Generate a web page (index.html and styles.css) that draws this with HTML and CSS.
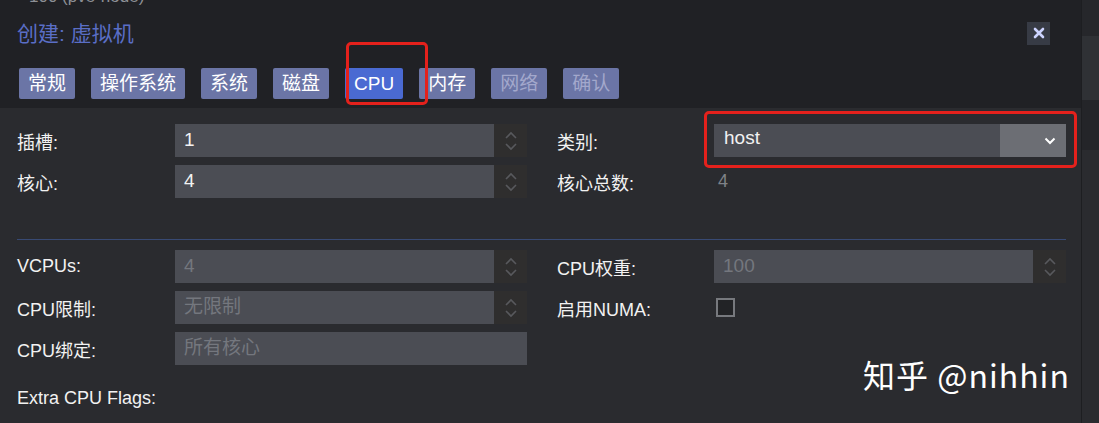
FILE: index.html
```html
<!DOCTYPE html>
<html lang="zh-CN">
<head>
    <meta charset="UTF-8">
    <title>创建: 虚拟机</title>
    <link rel="stylesheet" href="styles.css">
</head>
<body>

<div class="page">
    <div class="dialog">
        <div class="head">
            <div class="ghost"><span>100 (pve-node)</span></div>
            <div class="titlebar">
                <h1>创建: 虚拟机</h1>
                <button class="close" type="button">
                    <svg width="12" height="12" viewBox="0 0 12 12"><path d="M2 2 L10 10 M10 2 L2 10" stroke="#cdd4ff" stroke-width="2.6" stroke-linecap="round"/></svg>
                </button>
            </div>
            <div class="tabs">
                <span class="tab">常规</span>
                <span class="tab">操作系统</span>
                <span class="tab">系统</span>
                <span class="tab">磁盘</span>
                <span class="tab active">CPU</span>
                <span class="tab">内存</span>
                <span class="tab off">网络</span>
                <span class="tab off">确认</span>
            </div>
            <div class="mark mark-tab"></div>
        </div>

        <div class="body">
            <div class="section top">
                <div class="col">
                    <div class="row">
                        <label>插槽:</label>
                        <div class="field spin"><span class="val">1</span><span class="arrows"></span></div>
                    </div>
                    <div class="row">
                        <label>核心:</label>
                        <div class="field spin"><span class="val">4</span><span class="arrows"></span></div>
                    </div>
                </div>
                <div class="col right">
                    <div class="row">
                        <label>类别:</label>
                        <div class="field select">
                            <span class="val">host</span>
                            <span class="drop">
                                <svg width="12" height="8" viewBox="0 0 12 8"><path d="M1.5 1.5 L6 6 L10.5 1.5" fill="none" stroke="#fff" stroke-width="2"/></svg>
                            </span>
                        </div>
                    </div>
                    <div class="row">
                        <label>核心总数:</label>
                        <span class="plain">4</span>
                    </div>
                </div>
                <div class="mark mark-select"></div>
            </div>

            <div class="sep"></div>

            <div class="section">
                <div class="col">
                    <div class="row">
                        <label>VCPUs:</label>
                        <div class="field spin dim"><span class="val">4</span><span class="arrows"></span></div>
                    </div>
                    <div class="row">
                        <label>CPU限制:</label>
                        <div class="field spin dim"><span class="val">无限制</span><span class="arrows"></span></div>
                    </div>
                    <div class="row">
                        <label>CPU绑定:</label>
                        <div class="field dim"><span class="val">所有核心</span></div>
                    </div>
                    <div class="row flags">
                        <label>Extra CPU Flags:</label>
                    </div>
                </div>
                <div class="col right">
                    <div class="row">
                        <label>CPU权重:</label>
                        <div class="field spin dim"><span class="val">100</span><span class="arrows"></span></div>
                    </div>
                    <div class="row">
                        <label>启用NUMA:</label>
                        <span class="check"></span>
                    </div>
                    <div class="watermark">知乎 @nihhin</div>
                </div>
            </div>
        </div>
    </div>
    <div class="side"></div>
</div>

</body>
</html>
```

FILE: styles.css
```css
body {
    margin: 0;
    background-color: #232428;
    font-family: "Liberation Sans", "Noto Sans CJK SC", sans-serif;
    color: #f2f2f2;
    overflow: hidden;
}
.page {
    display: flex;
    height: 423px;
}
.dialog {
    width: 1081px;
    display: flex;
    flex-direction: column;
    border-right: 1px solid #1d1e21;
}
.side {
    flex: 1;
    background: linear-gradient(#26272b 0, #26272b 36px, #2f3135 36px, #2f3135 100px, #242529 100px, #242529 150px, #2a2b2f 150px);
}
.head {
    position: relative;
    height: 108px;
    background-color: #202125;
    padding: 0 0 0 17px;
    box-sizing: border-box;
}
.ghost {
    height: 8px;
    overflow: hidden;
    padding-left: 12px;
}
.ghost span {
    display: block;
    margin-top: -13px;
    font-size: 17px;
    color: #8d9096;
}
.titlebar {
    display: flex;
    justify-content: space-between;
    align-items: center;
    height: 50px;
    padding-right: 31px;
}
h1 {
    margin: 0 0 2px;
    font-size: 21px;
    font-weight: normal;
    color: #5a6ec6;
}
.close {
    width: 23px;
    height: 23px;
    padding: 0;
    border: none;
    background-color: #373b45;
    display: flex;
    align-items: center;
    justify-content: center;
}
.tabs {
    display: flex;
    gap: 16px;
    margin-top: 10px;
    padding-left: 2px;
}
.tab {
    height: 31px;
    line-height: 31px;
    padding: 0 9px;
    background-color: #6b75a6;
    border-radius: 2px;
    font-size: 19px;
    color: #fff;
}
.tab.active {
    background-color: #4a6ad2;
}
.tab.off {
    color: #a3a8cc;
}
.mark {
    position: absolute;
    border: 3px solid #e4211c;
    border-radius: 5px;
}
.mark-tab {
    left: 346px;
    top: 42px;
    width: 76px;
    height: 57px;
}
.body {
    flex: 1;
    position: relative;
    background-color: #2a2b2f;
    padding: 16px 0 0 17px;
}
.mark-select {
    left: 704px;
    top: 3px;
    width: 367px;
    height: 51px;
}
.section {
    display: flex;
    gap: 30px;
}
.col {
    display: flex;
    flex-direction: column;
    gap: 7px;
    width: 510px;
}
.col.right {
    width: 509px;
}
.row {
    display: flex;
    align-items: center;
    height: 33px;
}
label {
    width: 158px;
    flex: none;
    font-size: 18px;
}
.right label {
    width: 157px;
}
.field {
    display: flex;
    width: 352px;
    height: 33px;
    background-color: #4b4d54;
    font-size: 19px;
}
.val {
    flex: 1;
    padding-left: 9px;
    line-height: 31px;
}
.dim .val {
    color: #74777e;
}
.arrows {
    width: 33px;
    background-color: #2f2e2e;
    background-image: url("data:image/svg+xml,%3Csvg xmlns='http://www.w3.org/2000/svg' width='14' height='22' viewBox='0 0 14 22'%3E%3Cpath d='M2 8 L7 3 L12 8 M2 14 L7 19 L12 14' fill='none' stroke='%2358595d' stroke-width='1.6'/%3E%3C/svg%3E");
    background-repeat: no-repeat;
    background-position: center;
}
.select .val {
    padding-left: 10px;
    line-height: 28px;
}
.drop {
    width: 66px;
    background-color: #6c6e74;
    display: flex;
    align-items: center;
    justify-content: flex-end;
    padding-right: 10px;
    box-sizing: border-box;
}
.plain {
    padding-left: 4px;
    font-size: 18px;
    color: #7f8288;
}
.sep {
    height: 1px;
    width: 1049px;
    background-color: #384a74;
    margin: 41px 0 10px;
}
.section .col {
    gap: 8px;
}
.row.flags {
    margin-top: 9px;
}
.check {
    width: 15px;
    height: 15px;
    margin-left: 2px;
    border: 2px solid #77797e;
    background-color: #222326;
}
.watermark {
    margin: 19px 0 0 306px;
    font-family: "Noto Sans CJK SC", "Noto Sans", sans-serif;
    font-size: 32px;
    letter-spacing: 1px;
    white-space: nowrap;
    color: #fff;
}
```
